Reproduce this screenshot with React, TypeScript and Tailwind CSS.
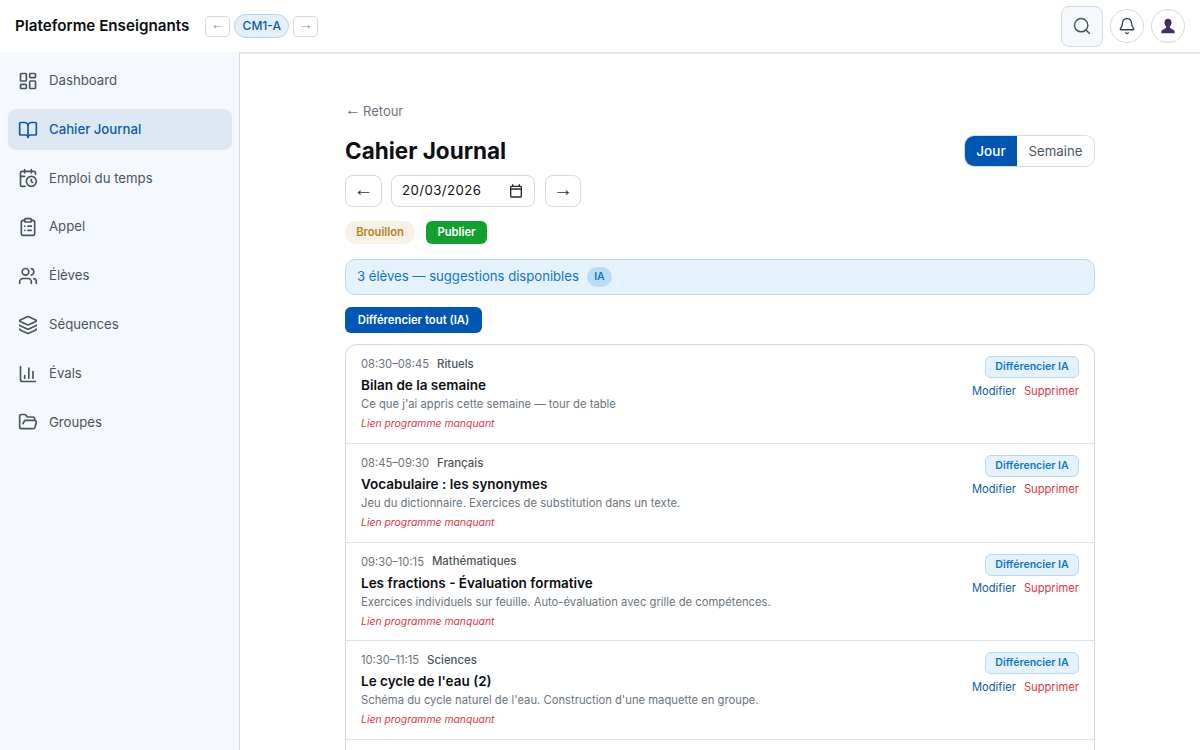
import {
  Bell,
  BookOpen,
  CalendarClock,
  ChartColumn,
  ClipboardList,
  FolderOpen,
  Layers,
  LayoutDashboard,
  Search,
  Users,
} from 'lucide-react';
import type { FC } from 'react';

const navItems = [
  { label: 'Dashboard', icon: LayoutDashboard },
  { label: 'Cahier Journal', icon: BookOpen, active: true },
  { label: 'Emploi du temps', icon: CalendarClock },
  { label: 'Appel', icon: ClipboardList },
  { label: 'Élèves', icon: Users },
  { label: 'Séquences', icon: Layers },
  { label: 'Évals', icon: ChartColumn },
  { label: 'Groupes', icon: FolderOpen },
];

const entries = [
  {
    time: '08:30–08:45',
    subject: 'Rituels',
    title: 'Bilan de la semaine',
    desc: "Ce que j'ai appris cette semaine — tour de table",
  },
  {
    time: '08:45–09:30',
    subject: 'Français',
    title: 'Vocabulaire : les synonymes',
    desc: 'Jeu du dictionnaire. Exercices de substitution dans un texte.',
  },
  {
    time: '09:30–10:15',
    subject: 'Mathématiques',
    title: 'Les fractions - Évaluation formative',
    desc: 'Exercices individuels sur feuille. Auto-évaluation avec grille de compétences.',
  },
  {
    time: '10:30–11:15',
    subject: 'Sciences',
    title: "Le cycle de l'eau (2)",
    desc: "Schéma du cycle naturel de l'eau. Construction d'une maquette en groupe.",
  },
];

const Header: FC = () => (
  <header className="flex h-[52px] shrink-0 items-center justify-between bg-white px-[15px]">
    <div className="flex items-center">
      <span className="text-[15.2px] font-semibold text-[#0b0f14]">Plateforme Enseignants</span>
      <div className="ml-[16px] flex items-center gap-[4px]">
        <button className="flex h-[21px] w-[25px] items-center justify-center rounded-[4px] border border-[#d3dae0] pb-[3px] font-['Liberation_Sans',sans-serif] text-[14px] text-[#8a929b]">
          ←
        </button>
        <span className="flex h-[24px] w-[55px] items-center justify-center rounded-full border border-[#b9d3ec] bg-[#e3eff9] text-[12px] font-medium text-[#0b5cad]">
          CM1-A
        </span>
        <button className="flex h-[21px] w-[25px] items-center justify-center rounded-[4px] border border-[#d3dae0] pb-[3px] font-['Liberation_Sans',sans-serif] text-[14px] text-[#8a929b]">
          →
        </button>
      </div>
    </div>
    <div className="flex items-center gap-[7px]">
      <button className="flex h-[41px] w-[42px] items-center justify-center rounded-[8px] border border-[#d3dae0] bg-[#f5f8fc] text-[#4b5560]">
        <Search className="size-[20px]" strokeWidth={1.75} />
      </button>
      <button className="flex size-[34px] items-center justify-center rounded-full border border-[#d3dae0] bg-white text-[#333c47]">
        <Bell className="size-[18px]" strokeWidth={1.75} />
      </button>
      <button className="flex size-[34px] items-center justify-center rounded-full border border-[#d3dae0] bg-white">
        <svg viewBox="0 0 20 20" className="size-[18px]" fill="#45286f">
          <path d="M10 2c2.400 0 3.900 1.800 3.900 4.200 0 1.900-.8 3.500-1.800 4.300v1.300c0 .7 1 1.100 2.600 1.800 1.700.7 2.600 1.300 2.600 2.400V18H2.700v-2c0-1.100.9-1.700 2.600-2.400 1.600-.7 2.600-1.100 2.600-1.800v-1.300c-1-.8-1.800-2.400-1.800-4.300C6.100 3.800 7.600 2 10 2z" />
        </svg>
      </button>
    </div>
  </header>
);

const Sidebar: FC = () => (
  <aside className="flex w-[240px] shrink-0 flex-col gap-[7.8px] border-r border-[#d3dae0] bg-[#f5f8fc] pt-[8.4px] pr-[7px] pl-[8px]">
    {navItems.map(({ label, icon: Icon, active }) => (
      <a
        key={label}
        className={
          active
            ? 'flex h-[41px] items-center gap-[11px] rounded-[8px] bg-[#dde8f2] px-[10px] text-[13.2px] font-medium text-[#0b5cad]'
            : 'flex h-[41px] items-center gap-[11px] rounded-[8px] px-[10px] text-[13.2px] text-[#4b5560]'
        }
      >
        <Icon className="size-[20px]" strokeWidth={2} />
        {label}
      </a>
    ))}
  </aside>
);

const EntryRow: FC<(typeof entries)[number]> = ({ time, subject, title, desc }) => (
  <div className="flex h-[98.75px] shrink-0 justify-between border-b border-[#dfe4e8] px-[15px] pt-[11.5px]">
    <div>
      <div className="flex h-[16px] items-center gap-[8px]">
        <span className="text-[11.2px] text-[#6b7480]">{time}</span>
        <span className="text-[11.4px] font-medium text-[#4b5560]">{subject}</span>
      </div>
      <div className="mt-[2.5px] h-[21px] text-[13.5px] leading-[20px] font-semibold text-[#0b0f14]">{title}</div>
      <div className="h-[17px] text-[11.25px] leading-[17px] text-[#6b7480]">{desc}</div>
      <div className="mt-[2px] h-[17px] text-[10.4px] leading-[17px] text-[#dc3545] italic">
        Lien programme manquant
      </div>
    </div>
    <div className="-mt-[0.5px] flex flex-col items-end">
      <button className="flex h-[22px] w-[94px] items-center justify-center rounded-[6px] border border-[#b5daf7] bg-[#e6f2fb] text-[10.56px] font-semibold text-[#0b78d0]">
        Différencier IA
      </button>
      <div className="mt-[4.5px] flex gap-[8px] text-[11.2px] leading-[16px]">
        <span className="text-[#0b5cad]">Modifier</span>
        <span className="text-[#dc3545]">Supprimer</span>
      </div>
    </div>
  </div>
);

const Main: FC = () => (
  <main className="flex min-w-0 flex-1 justify-center overflow-hidden border-t-2 border-[#e3e7eb] bg-white">
    <div className="flex w-[750px] flex-col pt-[49px]">
      <div className="flex h-[17px] items-center gap-[2px] text-[13px] text-[#6b7480]">
        <span className="pb-[3px] font-['Liberation_Sans',sans-serif] text-[16px]">←</span>
        <span>Retour</span>
      </div>
      <div className="mt-[13px] flex items-center justify-between">
        <h1 className="text-[22.5px] leading-[36px] font-bold text-[#0b0f14]">Cahier Journal</h1>
        <div className="flex h-[32px] overflow-hidden rounded-[10px] border border-[#d3dae0]">
          <span className="flex w-[52px] items-center justify-center bg-[#0057b3] text-[13.5px] font-medium text-white">Jour</span>
          <span className="flex w-[77px] items-center justify-center bg-white pt-[1px] text-[13.2px] text-[#4b5560]">Semaine</span>
        </div>
      </div>
      <div className="mt-[6px] flex items-center gap-[9px]">
        <button className="flex h-[32px] w-[37px] items-center justify-center rounded-[8px] border border-[#d3dae0] pb-[4px] font-['Liberation_Sans',sans-serif] text-[20px] text-[#333c47]">
          ←
        </button>
        <div className="flex h-[32px] w-[144px] items-center justify-between rounded-[8px] border border-[#d3dae0] px-[10px] text-[13.2px] tracking-[0.45px] text-[#0b0f14]">
          20/03/2026
          <svg viewBox="0 0 24 24" className="size-[16px]" fill="#1f2933">
            <path d="M19 4h-1V2h-2v2H8V2H6v2H5a2 2 0 0 0-2 2v14a2 2 0 0 0 2 2h14a2 2 0 0 0 2-2V6a2 2 0 0 0-2-2zm0 16H5V10h14v10zm0-12H5V6h14v2z" />
          </svg>
        </div>
        <button className="ml-[1px] flex h-[32px] w-[36px] items-center justify-center rounded-[8px] border border-[#d3dae0] pb-[4px] font-['Liberation_Sans',sans-serif] text-[20px] text-[#333c47]">
          →
        </button>
      </div>
      <div className="mt-[14px] flex items-center gap-[11px] text-[11.2px]">
        <span className="flex h-[23px] w-[70px] items-center justify-center rounded-full bg-[#f7f1e6] font-semibold text-[#b8821b]">
          Brouillon
        </span>
        <button className="flex h-[23px] w-[61px] items-center justify-center rounded-[6px] bg-[#12a02f] font-semibold text-white">
          Publier
        </button>
      </div>
      <div className="mt-[15px] flex h-[36px] items-center gap-[8px] rounded-[10px] border border-[#b5daf7] bg-[#e6f2fb] px-[11px] text-[13.12px] text-[#0b78d0]">
        3 élèves — suggestions disponibles
        <span className="flex h-[20px] w-[25px] items-center justify-center rounded-full bg-[#bcdcf6] text-[10.4px] font-semibold">
          IA
        </span>
      </div>
      <button className="mt-[12px] flex h-[26px] w-[137px] items-center justify-center rounded-[6px] bg-[#0057b3] text-[11.3px] font-semibold text-white">
        Différencier tout (IA)
      </button>
      <div className="mt-[11px] flex flex-1 flex-col overflow-hidden rounded-t-[12px] border border-b-0 border-[#d3dae0]">
        {entries.map((entry) => (
          <EntryRow key={entry.time} {...entry} />
        ))}
      </div>
    </div>
  </main>
);

export default function App() {
  return (
    <div className="flex h-[750px] flex-col overflow-hidden bg-white font-['Inter',sans-serif]">
      <Header />
      <div className="flex min-h-0 flex-1">
        <Sidebar />
        <Main />
      </div>
    </div>
  );
}
